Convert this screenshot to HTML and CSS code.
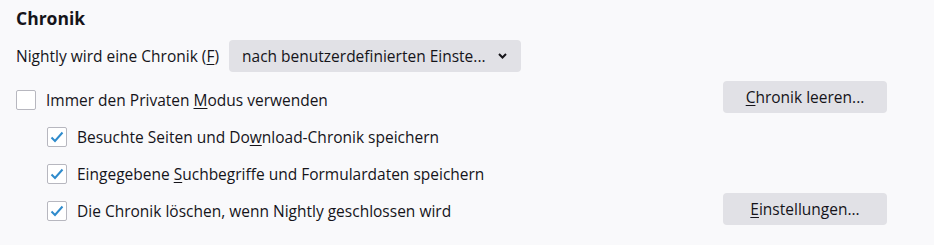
FILE: index.html
```html
<!DOCTYPE html>
<html lang="de">
<head>
<meta charset="utf-8">
<link rel="stylesheet" href="styles.css">
</head>
<body>
<section class="prefs">
  <h2 class="title">Chronik</h2>
  <div class="row history-mode">
    <span class="label">Nightly wird eine Chronik (<u>F</u>)</span>
    <button class="btn dropdown">nach benutzerdefinierten Einste...
      <svg class="chev" width="9" height="6" viewBox="0 0 9 6"><path d="M1 1l3.5 3.5L8 1" fill="none" stroke="#15141a" stroke-width="2"/></svg>
    </button>
  </div>
  <div class="row main-row">
    <label class="check"><span class="box"></span><span>Immer den Privaten <u>M</u>odus verwenden</span></label>
    <button class="btn side"><u>C</u>hronik leeren...</button>
  </div>
  <div class="sub">
    <div class="row sub-row first">
      <label class="check"><span class="box checked"><svg width="14" height="12" viewBox="0 0 14 12"><path d="M1.5 6.5l3.5 3.5L12.5 1.5" fill="none" stroke="#2f8bcc" stroke-width="2"/></svg></span><span>Besuchte Seiten und Do<u>w</u>nload-Chronik speichern</span></label>
    </div>
    <div class="row sub-row">
      <label class="check"><span class="box checked"><svg width="14" height="12" viewBox="0 0 14 12"><path d="M1.5 6.5l3.5 3.5L12.5 1.5" fill="none" stroke="#2f8bcc" stroke-width="2"/></svg></span><span>Eingegebene <u>S</u>uchbegriffe und Formulardaten speichern</span></label>
    </div>
    <div class="row sub-row last">
      <label class="check"><span class="box checked"><svg width="14" height="12" viewBox="0 0 14 12"><path d="M1.5 6.5l3.5 3.5L12.5 1.5" fill="none" stroke="#2f8bcc" stroke-width="2"/></svg></span><span>Die Chronik löschen, wenn Nightly geschlossen wird</span></label>
      <button class="btn side"><u>E</u>instellungen...</button>
    </div>
  </div>
</section>
</body>
</html>
```
FILE: styles.css
```css
html, body {
  margin: 0;
  padding: 0;
  background: #f9f9fb;
}
body {
  font-family: "Open Sans", "Noto Sans", sans-serif;
  font-size: 15.5px;
  color: #15141a;
}
.prefs {
  width: 871px;
  padding: 6px 0 0 16px;
}
.title {
  margin: 0;
  font-size: 17.5px;
  font-weight: 700;
  line-height: 24px;
}
.row {
  display: flex;
  align-items: center;
}
.history-mode {
  margin-top: 10px;
  height: 32px;
}
.label {
  margin-right: 10px;
}
u {
  text-decoration-thickness: 1px;
  text-underline-offset: 2px;
}
.btn {
  font: inherit;
  color: inherit;
  background: #e1e1e6;
  border: none;
  border-radius: 4px;
  height: 32px;
  padding: 0;
}
.dropdown {
  width: 292px;
  display: flex;
  align-items: center;
  padding-left: 13px;
  white-space: nowrap;
}
.chev {
  margin-left: 12px;
}
.main-row {
  margin-top: 9px;
  height: 32px;
  justify-content: space-between;
}
.main-row .check {
  padding-top: 5px;
}
.side {
  width: 164px;
}
.check {
  display: flex;
  align-items: center;
  gap: 10px;
}
.box {
  width: 20px;
  height: 20px;
  box-sizing: border-box;
  border: 1px solid #b7b7bf;
  border-radius: 2px;
  background: #fff;
  display: flex;
  align-items: center;
  justify-content: center;
}
.sub {
  padding-left: 31px;
}
.sub-row {
  height: 32px;
  margin-top: 5px;
}
.sub-row.first {
  margin-top: 8px;
}
.sub-row.last {
  margin-top: 3px;
  justify-content: space-between;
}
.sub-row.last .check {
  padding-top: 4px;
}
```
